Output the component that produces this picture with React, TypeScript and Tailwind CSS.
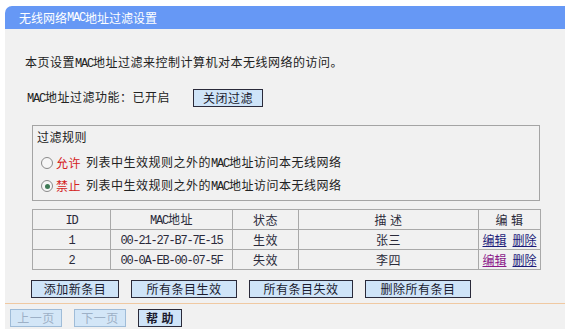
import React from 'react';

// halfwidth latin in the old router pages is a narrow bitmap face
function M({ children }: { children: React.ReactNode }) {
  return (
    <span className="font-['Liberation_Mono',monospace] text-[12px] tracking-[-1.2px]">{children}</span>
  );
}

function Btn({
  children,
  width,
  disabled = false,
  bold = false,
}: {
  children: React.ReactNode;
  width: string;
  disabled?: boolean;
  bold?: boolean;
}) {
  return (
    <div
      className={
        'flex items-center justify-center h-[18px] ' +
        width +
        (disabled
          ? ' bg-[#d3e6f7] border border-[#9fbcd8] text-[#9db0c6]'
          : ' bg-[#cfe4f8] border border-[#2a2a3a] text-[#1a1a2e]') +
        (bold ? ' font-bold' : '')
      }
    >
      {children}
    </div>
  );
}

function Radio({ checked }: { checked: boolean }) {
  return (
    <span className="inline-flex items-center justify-center w-[12px] h-[12px] rounded-full border border-[#8a8a8a] bg-[#f6f6f6]">
      {checked && <span className="w-[5px] h-[5px] rounded-full bg-[#3f7a56]" />}
    </span>
  );
}

const ROWS = [
  { id: '1', mac: '00-21-27-B7-7E-15', state: '生效', desc: '张三', visited: false },
  { id: '2', mac: '00-0A-EB-00-07-5F', state: '失效', desc: '李四', visited: true },
];

const cell = 'border border-[#a9a9a9] h-[20px] p-0 text-center font-normal';

export default function App() {
  return (
    <div className="w-[565px] h-[329px] overflow-hidden bg-white pt-[6px] pl-[5px] text-[12px] leading-[16px] text-[#222] font-['Noto_Sans_CJK_SC','Noto_Sans',sans-serif]">
      <div className="h-[23px] bg-[#6698f5] rounded-tl-[7px] pl-[14px] flex items-center text-white">
        无线网络<M>MAC</M>地址过滤设置
      </div>

      <div className="bg-[#f1f1f1] h-[300px] tracking-[0.5px]">
        <div className="pt-[25px] pl-[20px]">
          本页设置<M>MAC</M>地址过滤来控制计算机对本无线网络的访问。
        </div>

        <div className="mt-[17px] pl-[22px] flex items-center h-[17px]">
          <span className="w-[166px]">
            <M>MAC</M>地址过滤功能：已开启
          </span>
          <Btn width="w-[70px]">关闭过滤</Btn>
        </div>

        <div className="ml-[27px] mt-[19px] w-[508px] h-[76px] border border-[#a4a4a4] pl-[4px] pt-[3px]">
          <div>过滤规则</div>
          <div className="mt-[8px] flex items-center h-[20px] pl-[4px]">
            <Radio checked={false} />
            <span className="ml-[3px] text-[#d42020]">允许</span>
            <span className="ml-[5px]">
              列表中生效规则之外的<M>MAC</M>地址访问本无线网络
            </span>
          </div>
          <div className="mt-[3px] flex items-center h-[20px] pl-[4px]">
            <Radio checked={true} />
            <span className="ml-[3px] text-[#d42020]">禁止</span>
            <span className="ml-[5px]">
              列表中生效规则之外的<M>MAC</M>地址访问本无线网络
            </span>
          </div>
        </div>

        <table className="ml-[27px] mt-[8px] w-[508px] border-collapse table-fixed text-[#2a2a3a]">
          <colgroup>
            <col className="w-[78px]" />
            <col className="w-[122px]" />
            <col className="w-[66px]" />
            <col className="w-[180px]" />
            <col className="w-[62px]" />
          </colgroup>
          <thead>
            <tr>
              <th className={cell}>
                <M>ID</M>
              </th>
              <th className={cell}>
                <M>MAC</M>地址
              </th>
              <th className={cell}>状态</th>
              <th className={cell}>描 述</th>
              <th className={cell}>编 辑</th>
            </tr>
          </thead>
          <tbody>
            {ROWS.map((r) => (
              <tr key={r.id}>
                <td className={cell}>
                  <M>{r.id}</M>
                </td>
                <td className={cell}>
                  <M>{r.mac}</M>
                </td>
                <td className={cell}>{r.state}</td>
                <td className={cell}>{r.desc}</td>
                <td className={cell + ' tracking-normal'}>
                  <span className={'underline ' + (r.visited ? 'text-[#8a1a8a]' : 'text-[#1c1c7a]')}>编辑</span>
                  <span className="ml-[6px] underline text-[#1c1c7a]">删除</span>
                </td>
              </tr>
            ))}
          </tbody>
        </table>

        <div className="mt-[10px] ml-[26px] flex gap-[12px]">
          <Btn width="w-[88px]">添加新条目</Btn>
          <Btn width="w-[106px]">所有条目生效</Btn>
          <Btn width="w-[104px]">所有条目失效</Btn>
          <Btn width="w-[106px]">删除所有条目</Btn>
        </div>

        <div className="mt-[5px] h-px bg-[#f0c9a2]" />

        <div className="mt-[5px] ml-[5px] flex gap-[12px]">
          <Btn width="w-[52px]" disabled>
            上一页
          </Btn>
          <Btn width="w-[52px]" disabled>
            下一页
          </Btn>
          <Btn width="w-[44px]" bold>
            帮 助
          </Btn>
        </div>
      </div>
    </div>
  );
}
